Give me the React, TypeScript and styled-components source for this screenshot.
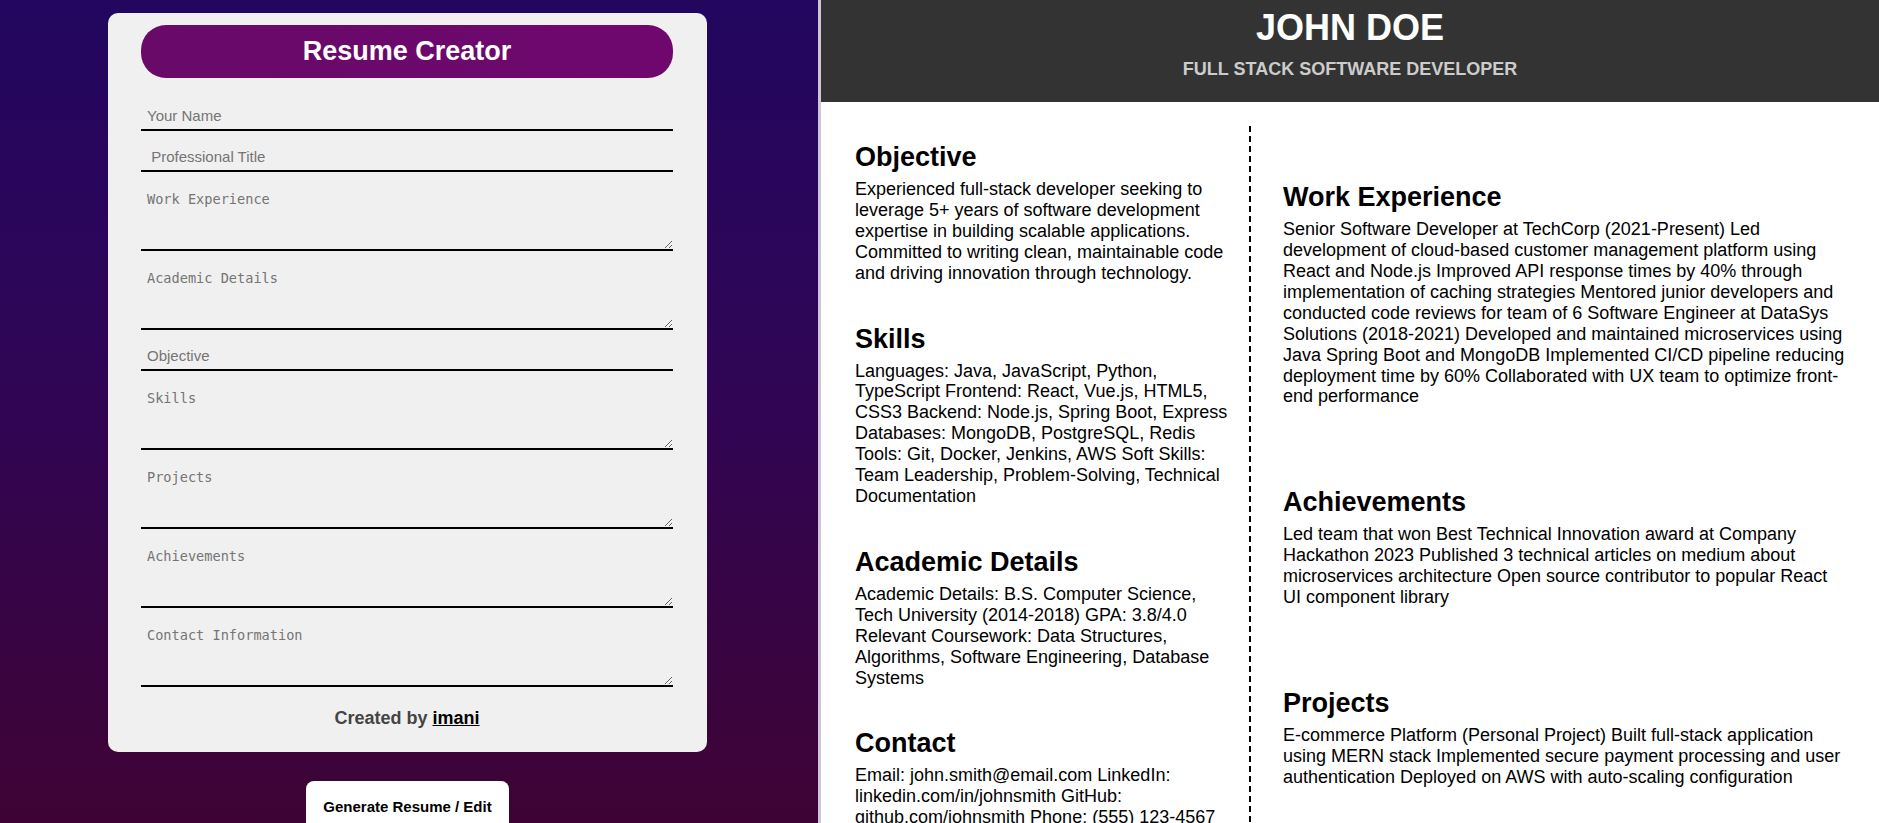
import React from "react";
import styled, { createGlobalStyle } from "styled-components";

const GlobalStyle = createGlobalStyle`
  html, body {
    margin: 0;
    padding: 0;
  }
  body {
    font-family: "Liberation Sans", Arial, sans-serif;
    overflow: hidden;
  }
  * {
    box-sizing: border-box;
  }
`;

const Layout = styled.div`
  display: grid;
  grid-template-columns: 818px 1fr;
  height: 100vh;
  overflow: hidden;
`;

const EditorPane = styled.div`
  background: linear-gradient(180deg, #22065f 0%, #2f0556 45%, #3e0334 100%);
  padding: 13px 3px 0 0;
  display: flex;
  flex-direction: column;
  align-items: center;
  overflow: hidden;
`;

const FormCard = styled.div`
  width: 599px;
  background: #f0f0f0;
  border-radius: 10px;
  padding: 12px 34px 23.5px 33px;
  display: flex;
  flex-direction: column;
`;

const TitleBar = styled.h1`
  margin: 0 0 24px;
  height: 53px;
  border-radius: 25px;
  background: linear-gradient(90deg, #690a69 0%, #6f076f 100%);
  color: #ffffff;
  font-family: "Liberation Sans", Arial, sans-serif;
  font-size: 27px;
  font-weight: 700;
  display: flex;
  align-items: center;
  justify-content: center;
`;

const fieldBase = `
  width: 100%;
  background: transparent;
  border: none;
  border-bottom: 2px solid #000;
  outline: none;
  margin: 0 0 12.5px;
  color: #222;
  &::placeholder {
    color: #757575;
    opacity: 1;
  }
`;

const LineField = styled.input`
  ${fieldBase}
  height: 28.5px;
  padding: 0 6px;
  font-family: "Liberation Sans", Arial, sans-serif;
  font-size: 15px;
`;

const AreaField = styled.textarea`
  ${fieldBase}
  height: 66.5px;
  padding: 7px 6px;
  font-family: "DejaVu Sans Mono", "Liberation Mono", monospace;
  font-size: 13.6px;
  resize: vertical;
  display: block;
`;

const Credit = styled.p`
  margin: 8.5px 0 0;
  text-align: center;
  font-family: "Liberation Sans", Arial, sans-serif;
  font-size: 18px;
  font-weight: 700;
  color: #444444;

  a {
    color: #000;
    text-decoration: underline;
  }
`;

const GenerateButton = styled.button`
  margin-top: 29px;
  padding: 17px 17.5px;
  background: #ffffff;
  border: none;
  border-radius: 8px;
  font-family: "Liberation Sans", Arial, sans-serif;
  font-size: 15px;
  font-weight: 700;
  color: #000;
  cursor: pointer;
`;

const PreviewPane = styled.div`
  background: #ffffff;
  border-left: 3px solid #cdc6d8;
  font-family: "Liberation Sans", Arial, sans-serif;
  font-size: 18px;
  color: #000;
  overflow: hidden;
`;

const ResumeHeader = styled.header`
  background: #333333;
  padding: 7px 0 22px;
  text-align: center;
`;

const Name = styled.h1`
  margin: 0;
  font-size: 36px;
  font-weight: 700;
  color: #ffffff;
`;

const Role = styled.p`
  margin: 10px 0 0;
  font-size: 18px;
  font-weight: 700;
  text-transform: uppercase;
  color: #cccccc;
`;

const ResumeBody = styled.div`
  display: grid;
  grid-template-columns: 396px 1fr;
  padding: 24px 32px 0 34px;
`;

const Column = styled.div<{ $side: "left" | "right" }>`
  display: flex;
  flex-direction: column;
  justify-content: ${(p) => (p.$side === "right" ? "space-evenly" : "flex-start")};
  padding: ${(p) => (p.$side === "left" ? "0 16px 0 0" : "0 0 0 32px")};
  border-right: ${(p) => (p.$side === "left" ? "2px dashed #000" : "none")};
`;

const Section = styled.section`
  padding: 16px 0 24px;
`;

const SectionTitle = styled.h2`
  margin: 0 0 6px;
  font-size: 27px;
  font-weight: 700;
`;

const SectionText = styled.p`
  margin: 0;
  line-height: 20.9px;
`;

type Entry = { title: string; text: string };

const leftSections: Entry[] = [
  {
    title: "Objective",
    text:
      "Experienced full-stack developer seeking to leverage 5+ years of software development expertise in building scalable applications. Committed to writing clean, maintainable code and driving innovation through technology.",
  },
  {
    title: "Skills",
    text:
      "Languages: Java, JavaScript, Python, TypeScript Frontend: React, Vue.js, HTML5, CSS3 Backend: Node.js, Spring Boot, Express Databases: MongoDB, PostgreSQL, Redis Tools: Git, Docker, Jenkins, AWS Soft Skills: Team Leadership, Problem-Solving, Technical Documentation",
  },
  {
    title: "Academic Details",
    text:
      "Academic Details: B.S. Computer Science, Tech University (2014-2018) GPA: 3.8/4.0 Relevant Coursework: Data Structures, Algorithms, Software Engineering, Database Systems",
  },
  {
    title: "Contact",
    text:
      "Email: john.smith@email.com LinkedIn: linkedin.com/in/johnsmith GitHub: github.com/johnsmith Phone: (555) 123-4567",
  },
];

const rightSections: Entry[] = [
  {
    title: "Work Experience",
    text:
      "Senior Software Developer at TechCorp (2021-Present) Led development of cloud-based customer management platform using React and Node.js Improved API response times by 40% through implementation of caching strategies Mentored junior developers and conducted code reviews for team of 6 Software Engineer at DataSys Solutions (2018-2021) Developed and maintained microservices using Java Spring Boot and MongoDB Implemented CI/CD pipeline reducing deployment time by 60% Collaborated with UX team to optimize front-end performance",
  },
  {
    title: "Achievements",
    text:
      "Led team that won Best Technical Innovation award at Company Hackathon 2023 Published 3 technical articles on medium about microservices architecture Open source contributor to popular React UI component library",
  },
  {
    title: "Projects",
    text:
      "E-commerce Platform (Personal Project) Built full-stack application using MERN stack Implemented secure payment processing and user authentication Deployed on AWS with auto-scaling configuration",
  },
];

type FormItem = { kind: "line" | "area"; label: string };

const formItems: FormItem[] = [
  { kind: "line", label: "Your Name" },
  { kind: "line", label: " Professional Title" },
  { kind: "area", label: "Work Experience" },
  { kind: "area", label: "Academic Details" },
  { kind: "line", label: "Objective" },
  { kind: "area", label: "Skills" },
  { kind: "area", label: "Projects" },
  { kind: "area", label: "Achievements" },
  { kind: "area", label: "Contact Information" },
];

export default function App() {
  return (
    <>
      <GlobalStyle />
      <Layout>
        <EditorPane>
          <FormCard>
            <TitleBar>Resume Creator</TitleBar>
            {formItems.map((item) =>
              item.kind === "line" ? (
                <LineField key={item.label} type="text" placeholder={item.label} />
              ) : (
                <AreaField key={item.label} placeholder={item.label} />
              )
            )}
            <Credit>
              Created by <a href="#">imani</a>
            </Credit>
          </FormCard>
          <GenerateButton type="button">Generate Resume / Edit</GenerateButton>
        </EditorPane>
        <PreviewPane>
          <ResumeHeader>
            <Name>JOHN DOE</Name>
            <Role>Full Stack Software Developer</Role>
          </ResumeHeader>
          <ResumeBody>
            <Column $side="left">
              {leftSections.map((s) => (
                <Section key={s.title}>
                  <SectionTitle>{s.title}</SectionTitle>
                  <SectionText>{s.text}</SectionText>
                </Section>
              ))}
            </Column>
            <Column $side="right">
              {rightSections.map((s) => (
                <Section key={s.title}>
                  <SectionTitle>{s.title}</SectionTitle>
                  <SectionText>{s.text}</SectionText>
                </Section>
              ))}
            </Column>
          </ResumeBody>
        </PreviewPane>
      </Layout>
    </>
  );
}
